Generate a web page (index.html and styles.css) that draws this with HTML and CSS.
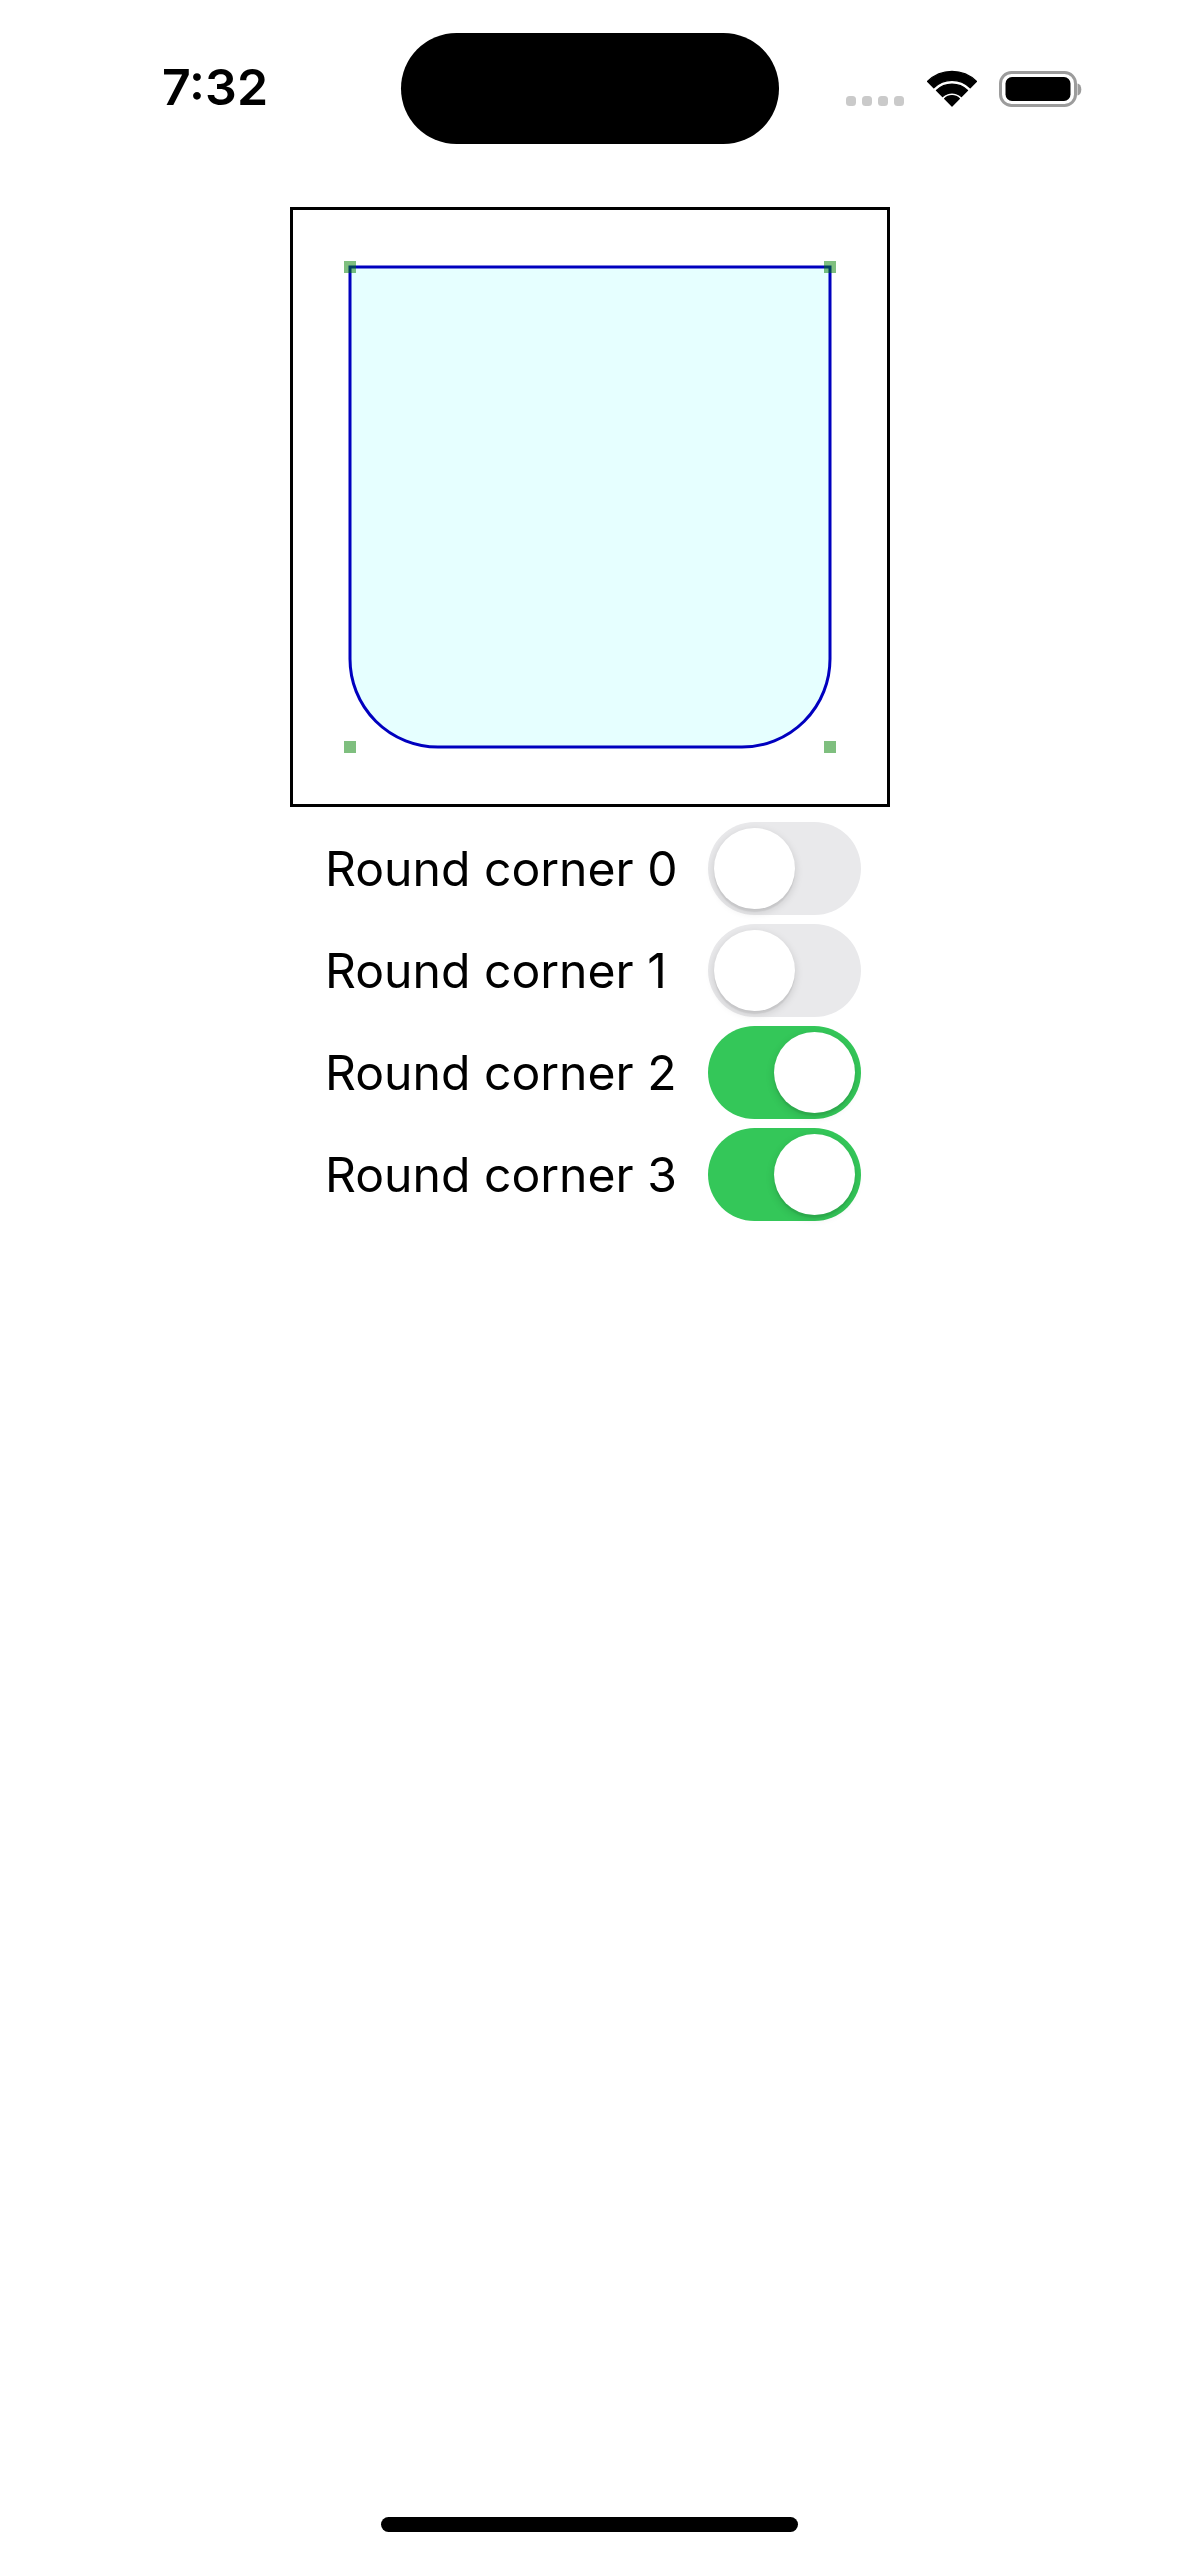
FILE: index.html
```html
<!DOCTYPE html>
<html lang="en">
<head>
<meta charset="utf-8">
<title>Round corners</title>
<link rel="stylesheet" href="styles.css">
</head>
<body>
<div class="screen">
  <header class="status">
    <div class="status-left"><span class="time">7:32</span></div>
    <div class="island"></div>
    <div class="status-right">
      <div class="signal"><i></i><i></i><i></i><i></i></div>
      <svg class="wifi" width="50" height="37" viewBox="0 0 50 37" aria-hidden="true">
        <g fill="#000" stroke="#000" stroke-width="1.2" stroke-linejoin="round">
          <path d="M25,36 L17.6,28.6 A10.5,10.5 0 0 1 32.4,28.6 Z"/>
          <path d="M9.4,20.4 A22.5,22.5 0 0 1 40.6,20.4 L34.4,26.6 A13.8,13.8 0 0 0 15.6,26.6 Z"/>
          <path d="M0.4,11.4 A35,35 0 0 1 49.6,11.4 L43.2,17.8 A26,26 0 0 0 6.8,17.8 Z"/>
        </g>
      </svg>
      <svg class="battery" width="83" height="36" viewBox="0 0 83 36" aria-hidden="true">
        <rect x="1.5" y="1.5" width="75" height="33" rx="11" ry="11" fill="none" stroke="#9c9c9c" stroke-width="3"/>
        <rect x="6.5" y="6" width="65" height="24" rx="6.5" ry="6.5" fill="#000"/>
        <path d="M78.5,12.5 A3.5,5.5 0 0 1 78.5,24.5 Z" fill="#9c9c9c"/>
      </svg>
    </div>
  </header>

  <main class="content">
    <div class="canvas">
      <svg class="shape" width="594" height="594" viewBox="0 0 594 594" aria-hidden="true">
        <path d="M57,57 H537 V449 A88,88 0 0 1 449,537 H145 A88,88 0 0 1 57,449 Z" fill="#e6ffff" stroke="#0000bf" stroke-width="3"/>
        <g fill="rgba(0,128,0,0.5)">
          <rect x="51" y="51" width="12" height="12"/>
          <rect x="531" y="51" width="12" height="12"/>
          <rect x="51" y="531" width="12" height="12"/>
          <rect x="531" y="531" width="12" height="12"/>
        </g>
      </svg>
    </div>

    <div class="controls">
      <div class="row"><span class="label">Round corner 0</span><span class="switch"><span class="knob"></span></span></div>
      <div class="row"><span class="label">Round corner 1</span><span class="switch"><span class="knob"></span></span></div>
      <div class="row"><span class="label">Round corner 2</span><span class="switch on"><span class="knob"></span></span></div>
      <div class="row"><span class="label">Round corner 3</span><span class="switch on"><span class="knob"></span></span></div>
    </div>
  </main>

  <div class="home-indicator"></div>
</div>
</body>
</html>
```

FILE: styles.css
```css
* { box-sizing: border-box; }

html, body {
  margin: 0;
  padding: 0;
  background: #ffffff;
}

body {
  font-family: Inter, "Noto Sans", "Liberation Sans", sans-serif;
  color: #000;
}

.screen {
  position: relative;
  width: 1179px;
  height: 2556px;
  overflow: hidden;
  background: #fff;
}

/* ---------- status bar ---------- */
.status {
  display: flex;
  align-items: center;
  height: 111px;
  margin-top: 33px;
}

.status-left {
  width: 400.5px;
  padding-left: 162px;
  display: flex;
  align-items: center;
}

.time {
  font-size: 50px;
  font-weight: 600;
  letter-spacing: 0;
  margin-bottom: 4px;
  line-height: normal;
}

.island {
  width: 378px;
  height: 111px;
  border-radius: 55.5px;
  background: #000;
  flex: none;
}

.status-right {
  display: flex;
  align-items: center;
  margin-left: 67.5px;
}

.signal {
  display: flex;
  gap: 6px;
  margin-top: 25px;
}

.signal i {
  display: block;
  width: 10px;
  height: 10px;
  border-radius: 3.5px;
  background: #cacaca;
}

.wifi {
  display: block;
  margin-left: 22.5px;
}

.battery {
  display: block;
  margin-left: 22.5px;
}

/* ---------- content ---------- */
.content {
  display: flex;
  flex-direction: column;
}

.canvas {
  width: 600px;
  height: 600px;
  margin: 63px 0 0 290px;
  border: 3px solid #000;
}

.shape {
  display: block;
}

.controls {
  width: 536px;
  margin: 15px 0 0 325px;
  display: flex;
  flex-direction: column;
  gap: 9px;
}

.row {
  display: flex;
  align-items: center;
  justify-content: space-between;
  height: 93px;
}

.label {
  font-size: 48.1px;
  font-weight: 400;
  line-height: normal;
  letter-spacing: 0;
}

.switch {
  width: 153px;
  height: 93px;
  border-radius: 46.5px;
  background: #e9e9eb;
  display: flex;
  align-items: center;
  padding: 0 6px;
  flex: none;
}

.switch.on {
  background: #34c759;
  justify-content: flex-end;
}

.knob {
  width: 81px;
  height: 81px;
  border-radius: 50%;
  background: #fff;
  box-shadow: 0 3px 8px rgba(0, 0, 0, 0.15), 0 3px 1px rgba(0, 0, 0, 0.06);
}

/* ---------- home indicator (system overlay) ---------- */
.home-indicator {
  position: absolute;
  left: 381px;
  bottom: 24px;
  width: 417px;
  height: 15px;
  border-radius: 7.5px;
  background: #000;
}
```
